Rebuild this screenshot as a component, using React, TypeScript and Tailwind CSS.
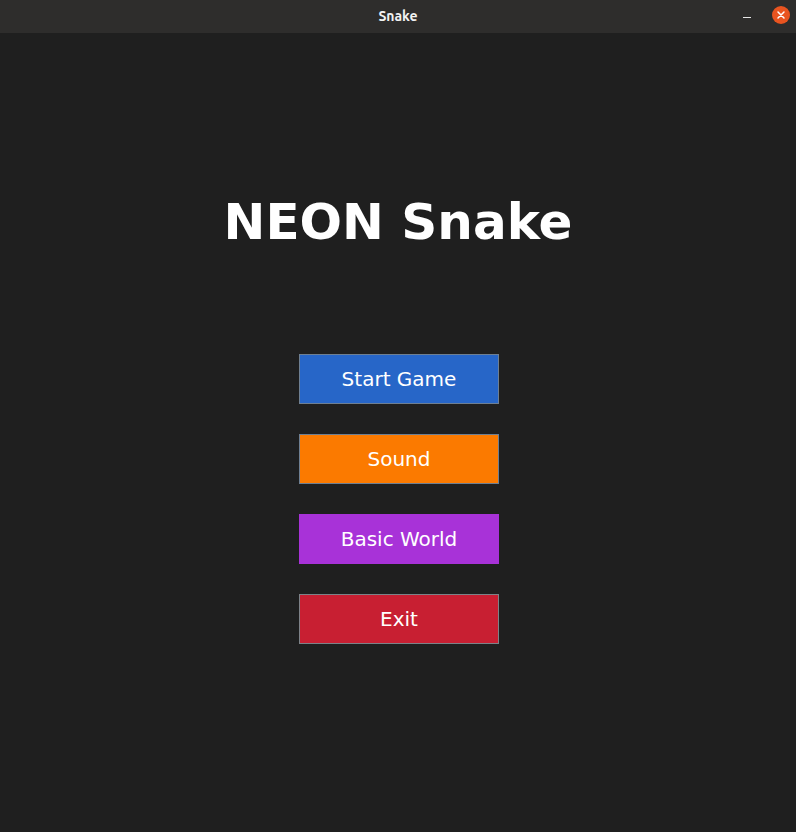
import React from "react";

const buttons = [
  { label: "Start Game", bg: "bg-[#2766c8]", border: "border-[#6e7f92]" },
  { label: "Sound", bg: "bg-[#fb7a00]", border: "border-[#6e7f92]" },
  { label: "Basic World", bg: "bg-[#a832d8]", border: "border-[#a832d8]" },
  { label: "Exit", bg: "bg-[#c81f32]", border: "border-[#7d8288]" },
];

export default function App() {
  return (
    <div className="w-[796px] h-[832px] flex flex-col bg-[#1f1f1f] overflow-hidden" style={{ fontFamily: '"DejaVu Sans", sans-serif' }}>
      <div className="h-[33px] shrink-0 bg-[#2e2d2c] flex items-center relative">
        <div className="flex-1 text-center text-[14px] font-bold text-[#f2f2f2]" style={{ fontFamily: '"Ubuntu", "DejaVu Sans", sans-serif' }}>Snake</div>
        <div className="absolute right-[6px] top-[6px] flex items-center gap-[21px]">
          <div className="w-[8px] h-[1px] bg-[#e6e6e6] mt-[4px]" />
          <div className="w-[18px] h-[18px] rounded-full bg-[#e95420] flex items-center justify-center">
            <svg width="10" height="10" viewBox="0 0 10 10">
              <path d="M2 2 L8 8 M8 2 L2 8" stroke="#fff" strokeWidth="1.5" strokeLinecap="round" />
            </svg>
          </div>
        </div>
      </div>
      <div className="flex flex-col items-center">
        <div className="mt-[160px] text-[50px] leading-[58px] font-bold text-white">NEON Snake</div>
        <div className="mt-[103px] ml-[2px] flex flex-col gap-[30px]">
          {buttons.map((b) => (
            <div key={b.label} className={`w-[200px] h-[50px] border ${b.bg} ${b.border} flex items-center justify-center text-[20px] text-white`}>
              {b.label}
            </div>
          ))}
        </div>
      </div>
    </div>
  );
}
